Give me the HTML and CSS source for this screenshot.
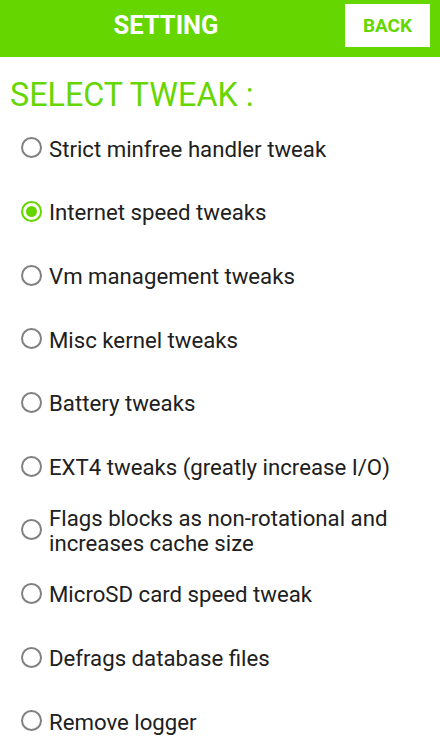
FILE: index.html
```html
<!DOCTYPE html>
<html>
<head>
<meta charset="utf-8">
<link rel="stylesheet" href="styles.css">
</head>
<body>
<div class="screen">
  <header class="bar">
    <div class="bar-title">SETTING</div>
    <button class="back">BACK</button>
  </header>
  <h1 class="heading">SELECT TWEAK :</h1>
  <ul class="list">
    <li class="row"><span class="radio"></span><span class="label">Strict minfree handler tweak</span></li>
    <li class="row"><span class="radio on"></span><span class="label">Internet speed tweaks</span></li>
    <li class="row"><span class="radio"></span><span class="label">Vm management tweaks</span></li>
    <li class="row"><span class="radio"></span><span class="label">Misc kernel tweaks</span></li>
    <li class="row"><span class="radio"></span><span class="label">Battery tweaks</span></li>
    <li class="row"><span class="radio"></span><span class="label">EXT4 tweaks (greatly increase I/O)</span></li>
    <li class="row"><span class="radio"></span><span class="label">Flags blocks as non-rotational and increases cache size</span></li>
    <li class="row"><span class="radio"></span><span class="label">MicroSD card speed tweak</span></li>
    <li class="row"><span class="radio"></span><span class="label">Defrags database files</span></li>
    <li class="row"><span class="radio"></span><span class="label">Remove logger</span></li>
  </ul>
  <div class="navline"><div class="navline-mid"></div></div>
</div>
</body>
</html>
```
FILE: styles.css
```css
html, body {
  margin: 0;
  padding: 0;
  background: #ffffff;
}
.screen {
  width: 440px;
  height: 751px;
  display: flex;
  flex-direction: column;
  font-family: Roboto, "Liberation Sans", sans-serif;
  overflow: hidden;
}
.bar {
  height: 57px;
  background: #66d600;
  display: flex;
  align-items: flex-start;
  padding: 4px 10px 0 0;
  box-sizing: border-box;
  flex: none;
}
.bar-title {
  flex: 1;
  text-align: center;
  color: #ffffff;
  font-weight: bold;
  font-size: 25.5px;
  line-height: 43px;
  padding-right: 13px;
}
.back {
  width: 85px;
  height: 43px;
  border: none;
  background: #ffffff;
  color: #66d600;
  font-family: Roboto, "Liberation Sans", sans-serif;
  font-weight: bold;
  font-size: 19px;
  padding: 0;
  margin: 0;
}
.heading {
  margin: 0;
  padding: 22px 0 5px 10px;
  height: 32px;
  font-size: 32.3px;
  line-height: 32px;
  font-weight: normal;
  color: #66d600;
  flex: none;
}
.list {
  list-style: none;
  margin: 0;
  padding: 0;
  display: grid;
  grid-auto-rows: 63.67px;
}
.row {
  display: flex;
  align-items: center;
  padding-left: 21px;
  padding-right: 14px;
}
.radio {
  flex: none;
  width: 21px;
  height: 21px;
  box-sizing: border-box;
  border: 2px solid #808080;
  border-radius: 50%;
  margin-right: 7px;
  display: flex;
  align-items: center;
  justify-content: center;
}
.radio.on {
  border-color: #66d600;
}
.radio.on::after {
  content: "";
  width: 11px;
  height: 11px;
  border-radius: 50%;
  background: #66d600;
}
.label {
  font-size: 22.2px;
  line-height: 25px;
  color: #202020;
  padding-top: 3px;
}
.navline {
  margin-top: auto;
  height: 3px;
  background: #000000;
  display: flex;
  justify-content: center;
  align-items: flex-end;
  flex: none;
}
.navline-mid {
  width: 360px;
  height: 1px;
  background: #444444;
}
```
